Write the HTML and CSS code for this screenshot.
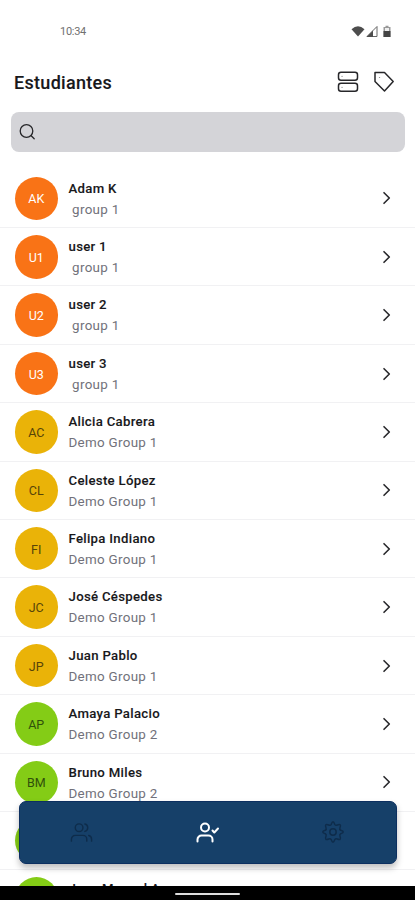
FILE: index.html
```html
<!DOCTYPE html>
<html lang="es">
<head>
<meta charset="utf-8">
<title>Estudiantes</title>
<link rel="stylesheet" href="styles.css">
</head>
<body>
<div class="app">
  <div class="status">
    <span class="time">10:34</span>
    <svg class="status-icons" width="41" height="14" viewBox="0 0 41 14">
      <path d="M0.5 4.2Q7-1.8 13.500 4.200L7 11.500Z" fill="#4d4d4d"/>
      <path d="M16 11.500L26 1.500V11.500Z" fill="none" stroke="#666" stroke-width="1"/>
      <path d="M15.500 12L22 5.500V12Z" fill="#4d4d4d"/>
      <path d="M34.500 0.800H37.500V2H39.500V12H32.500V2H34.500Z" fill="#999"/>
      <path d="M32.500 6H39.500V12H32.500Z" fill="#444"/>
      <path d="M34 3H38V6H34Z" fill="#eee"/>
    </svg>
  </div>
  <header class="header">
    <h1>Estudiantes</h1>
    <div class="actions">
      <svg width="22" height="22" viewBox="0 0 22 22" class="line">
        <rect x="1.500" y="1.300" width="19" height="8" rx="2.500"/>
        <rect x="1.500" y="12.300" width="19" height="8" rx="2.500"/>
        <path class="dot" d="M5 5.300h.1M5 16.300h.1"/>
      </svg>
      <svg width="22" height="22" viewBox="0 0 22 22" class="line">
        <path d="M2 1.500H11.500L20.200 10.500L11.500 20L2 10.500Z"/>
        <path class="dot" d="M6.500 6.500h.1"/>
      </svg>
    </div>
  </header>
  <div class="search">
    <svg width="18" height="18" viewBox="0 0 18 18" class="line thin">
      <circle cx="7.500" cy="8" r="6.300"/><path d="M12.200 12.800L15.200 15.800"/>
    </svg>
  </div>
  <main class="list" id="list"></main>
  <nav class="nav">
    <svg class="dim" width="23" height="23" viewBox="0 0 24 24">
      <circle cx="9.500" cy="7" r="4"/>
      <path d="M1.500 21v-2a4 4 0 0 1 4-4h8a4 4 0 0 1 4 4v2M22.500 21v-2a4 4 0 0 0-3-3.870M15.500 3.130a4 4 0 0 1 0 7.750"/>
    </svg>
    <svg class="active" width="25" height="24" viewBox="0 0 25 24">
      <circle cx="10" cy="7.500" r="4"/>
      <path d="M2.500 21.500v-2a4 4 0 0 1 4-4h7a4 4 0 0 1 4 4v2M17.500 10.500l1.800 2 3.700-4"/>
    </svg>
    <svg class="dim" width="24" height="24" viewBox="0 0 24 24">
      <circle cx="12" cy="12" r="3.200"/>
      <path d="M10.300 4.300Q12-.8 13.700 4.300Q14.600 5.700 16.300 5Q20.700 3.300 19 7.700Q18.300 9.400 19.700 10.300Q24.800 12 19.700 13.700Q18.300 14.600 19 16.300Q20.700 20.700 16.300 19Q14.600 18.300 13.700 19.700Q12 24.800 10.300 19.700Q9.400 18.300 7.700 19Q3.300 20.700 5 16.300Q5.700 14.600 4.300 13.700Q-.8 12 4.300 10.300Q5.700 9.400 5 7.700Q3.300 3.300 7.700 5Q9.400 5.700 10.300 4.300Z"/>
    </svg>
  </nav>
  <div class="system"><span></span></div>
</div>
<script src="app.js"></script>
</body>
</html>
```
FILE: styles.css
```css
* { box-sizing: border-box; }
body { margin: 0; background: #fff; font-family: Roboto, "Liberation Sans", sans-serif; }
.app { position: relative; width: 415px; height: 900px; overflow: hidden; }
.status { height: 62px; padding: 1px 23px 0 60px; display: flex; justify-content: space-between; align-items: center; }
.time { font-size: 11px; color: #707070; letter-spacing: -0.3px; }
.status-icons { display: block; }
.header { height: 40px; padding: 0 20px 0 14px; display: flex; justify-content: space-between; align-items: center; }
h1 { margin: 0; font-size: 18px; font-weight: 500; letter-spacing: 0.3px; color: #18181b; -webkit-text-stroke: 0.1px; }
.actions { display: flex; gap: 14px; }
.line { fill: none; stroke: #27272a; stroke-width: 1.5; stroke-linecap: round; stroke-linejoin: round; }
.thin { stroke-width: 1.3; }
.dot { stroke: #888; stroke-width: 1.2; }
.search { height: 39.5px; margin: 10px 10px 0 11px; padding-left: 8px; border-radius: 8px; background: #d4d4d8; display: flex; align-items: center; }
.list { padding-top: 18.2px; }
.row { height: 58.4px; padding: 0 20px 0 14.5px; border-bottom: 1px solid #f1f1f3; display: flex; align-items: center; }
.avatar { width: 43.5px; height: 43.5px; flex: none; border-radius: 50%; display: flex; align-items: center; justify-content: center; font-size: 12.5px; padding-top: 1px; }
.orange { background: #f97316; color: #fff; }
.yellow { background: #eab308; color: #574408; }
.green { background: #84cc16; color: #30500b; }
.text { flex: 1; margin-left: 10.5px; padding-top: 0.6px; font-size: 13.2px; line-height: 21px; letter-spacing: 0.3px; white-space: pre; }
.name { color: #18181b; font-weight: 500; -webkit-text-stroke: 0.1px; }
.group { color: #71717a; font-size: 13.4px; }
.chevron { fill: none; stroke: #27272a; stroke-width: 1.6; stroke-linecap: round; stroke-linejoin: round; }
.nav { position: absolute; left: 19px; top: 801px; width: 378px; height: 62.5px; padding-right: 2px; border-radius: 7px; border: 1px solid #0c2f60; background: #164069; box-shadow: 0 4px 6px rgba(0,0,0,.25); display: grid; grid-template-columns: 123px 128px 123px; place-items: center; }
.nav svg { fill: none; stroke-width: 1.5; stroke-linecap: round; stroke-linejoin: round; }
.nav .dim { stroke: #0e2c4b; }
.nav .active { stroke: #fff; stroke-width: 2; }
.system { position: absolute; left: 0; bottom: 0; width: 100%; height: 14px; background: #000; display: flex; justify-content: center; align-items: center; }
.system span { width: 65px; height: 2px; margin-top: 2px; border-radius: 1px; background: #ddd; }
```
FILE: app.js
```js
const students = [
  ["AK", "Adam K", " group 1", "orange"],
  ["U1", "user 1", " group 1", "orange"],
  ["U2", "user 2", " group 1", "orange"],
  ["U3", "user 3", " group 1", "orange"],
  ["AC", "Alicia Cabrera", "Demo Group 1", "yellow"],
  ["CL", "Celeste López", "Demo Group 1", "yellow"],
  ["FI", "Felipa Indiano", "Demo Group 1", "yellow"],
  ["JC", "José Céspedes", "Demo Group 1", "yellow"],
  ["JP", "Juan Pablo", "Demo Group 1", "yellow"],
  ["AP", "Amaya Palacio", "Demo Group 2", "green"],
  ["BM", "Bruno Miles", "Demo Group 2", "green"],
  ["", "", "", "green"],
  ["", "Jose Manuel A", "", "green"]
];
document.getElementById("list").innerHTML = students.map(([initials, name, group, color]) =>
  `<div class="row"><div class="avatar ${color}">${initials}</div><div class="text"><div class="name">${name || "&nbsp;"}</div><div class="group">${group || "&nbsp;"}</div></div><svg class="chevron" width="16" height="16" viewBox="0 0 16 16"><path d="M5 2.700L10.300 8L5 13.300"/></svg></div>`
).join("");
```
